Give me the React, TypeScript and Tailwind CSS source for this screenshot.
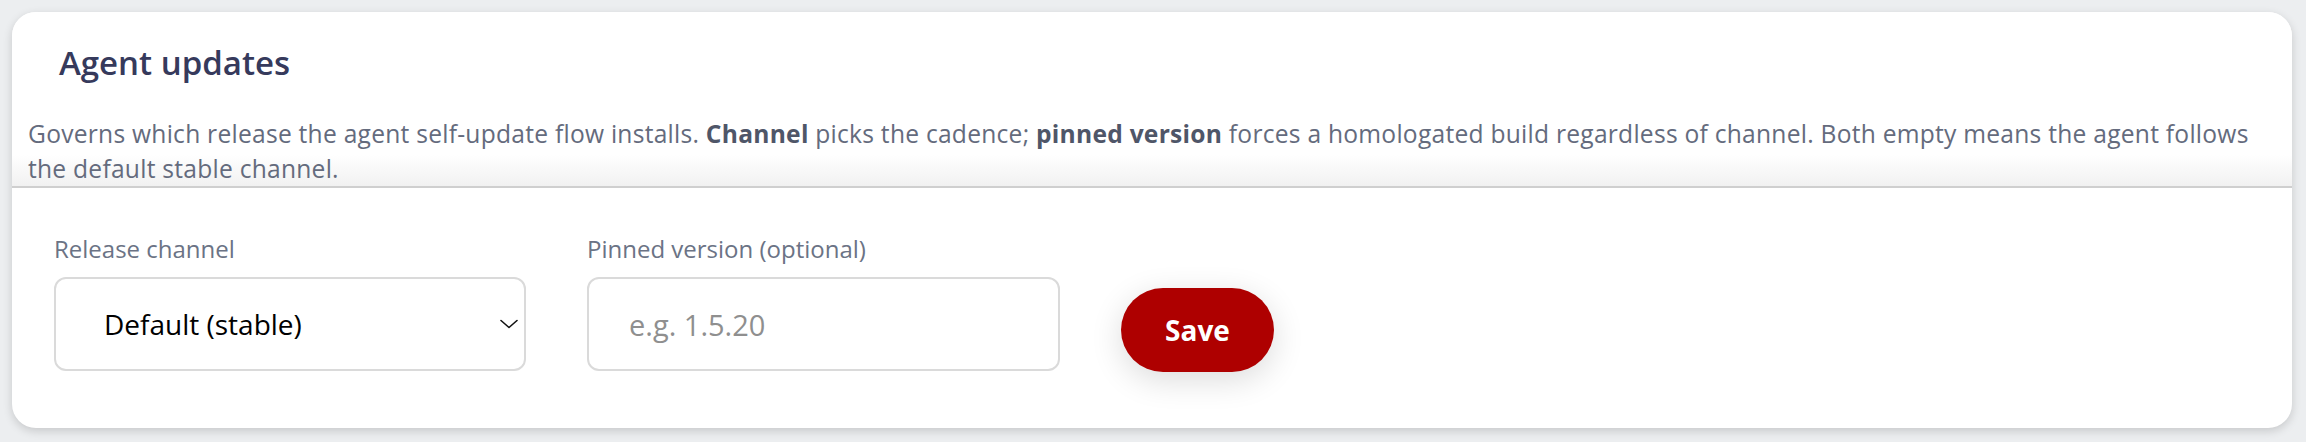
import React from "react";

const font = { fontFamily: "'Open Sans', 'Noto Sans', sans-serif" };

export default function App() {
  return (
    <div className="min-h-[442px] w-[2306px] bg-[#eceef0] px-[12px] pt-[12px] pb-[14px]" style={font}>
      <div className="w-[2280px] overflow-hidden rounded-[24px] bg-white shadow-[0_3px_10px_rgba(0,0,0,0.16)]">
        <div className="border-b-2 border-[#cfcfcf] bg-linear-to-b from-white from-82% to-[#f1f1f1] pl-[16px] pr-[16px]">
          <h2 className="pt-[31px] pl-[31px] text-[33px] leading-[40px] font-semibold text-[#363a5c]">
            Agent updates
          </h2>
          <p className="mt-[33px] text-[24.6px] leading-[35px] tracking-[0.25px] text-[#646b7d]">
            Governs which release the agent self-update flow installs.{" "}
            <span className="font-bold text-[#4f5668]">Channel</span> picks the cadence;{" "}
            <span className="font-bold text-[#4f5668]">pinned version</span> forces a homologated build regardless of
            channel. Both empty means the agent follows the default stable channel.
          </p>
        </div>
        <div className="flex items-end gap-[61px] px-[42px] pt-[47px] pb-[57px]">
          <div className="flex w-[472px] flex-col gap-[14px]">
            <label className="text-[24px] leading-[28px] text-[#6b7385]">Release channel</label>
            <div className="relative">
              <select
                className="h-[94px] w-full appearance-none rounded-[12px] border-2 border-[#dadada] bg-white pl-[48px] text-[28px] text-black outline-none"
                defaultValue="default"
                style={font}
              >
                <option value="default">Default (stable)</option>
              </select>
              <svg
                className="pointer-events-none absolute right-[8px] top-[42px]"
                width="18"
                height="10"
                viewBox="0 0 18 10"
                fill="none"
              >
                <path d="M1 1.5L9 8.5L17 1.5" stroke="#111" strokeWidth="1.6" strokeLinecap="round" strokeLinejoin="round" />
              </svg>
            </div>
          </div>
          <div className="flex w-[473px] flex-col gap-[14px]">
            <label className="text-[24px] leading-[28px] text-[#6b7385]">Pinned version (optional)</label>
            <input
              className="h-[94px] w-full rounded-[12px] border-2 border-[#dadada] bg-white pl-[40px] text-[29px] text-black outline-none placeholder:text-[#8f8f8f]"
              placeholder="e.g. 1.5.20"
              style={font}
            />
          </div>
          <button className="mb-[-1px] h-[84px] w-[153px] rounded-full bg-[#ae0000] text-[28px] font-bold text-white shadow-[0_8px_32px_rgba(0,0,0,0.14)]">
            Save
          </button>
        </div>
      </div>
    </div>
  );
}
